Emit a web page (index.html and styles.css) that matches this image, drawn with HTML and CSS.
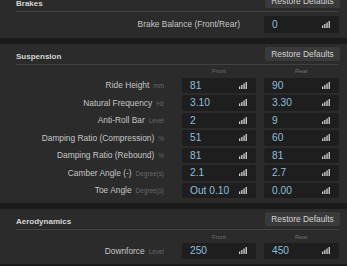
FILE: index.html
```html
<!DOCTYPE html>
<html>
<head>
<meta charset="utf-8">
<link rel="stylesheet" href="styles.css">
</head>
<body>

<!--brakes-->
<div class="panel first">
	<div class="head">
		<div class="title">Brakes</div>
		<div class="restore">Restore Defaults</div>
	</div>
	<div class="row single">
		<div class="name wide">Brake Balance (Front/Rear)</div>
		<div class="box"><span class="val">0</span><svg class="sig" width="8" height="7" viewBox="0 0 8 7"><rect x="0" y="4.5" width="1.3" height="2.5"/><rect x="2.2" y="3" width="1.3" height="4"/><rect x="4.4" y="1.5" width="1.3" height="5.5"/><rect x="6.6" y="0" width="1.3" height="7"/></svg></div>
	</div>
</div>

<!--suspension-->
<div class="panel">
	<div class="head">
		<div class="title">Suspension</div>
		<div class="restore">Restore Defaults</div>
	</div>
	<div class="cols">
		<div></div>
		<div class="col">Front</div>
		<div class="col">Rear</div>
	</div>
	<div class="row">
		<div class="name">Ride Height<span class="unit">mm</span></div>
		<div class="box"><span class="val">81</span><svg class="sig" width="8" height="7" viewBox="0 0 8 7"><rect x="0" y="4.5" width="1.3" height="2.5"/><rect x="2.2" y="3" width="1.3" height="4"/><rect x="4.4" y="1.5" width="1.3" height="5.5"/><rect x="6.6" y="0" width="1.3" height="7"/></svg></div>
		<div class="box"><span class="val">90</span><svg class="sig" width="8" height="7" viewBox="0 0 8 7"><rect x="0" y="4.5" width="1.3" height="2.5"/><rect x="2.2" y="3" width="1.3" height="4"/><rect x="4.4" y="1.5" width="1.3" height="5.5"/><rect x="6.6" y="0" width="1.3" height="7"/></svg></div>
	</div>
	<div class="row">
		<div class="name">Natural Frequency<span class="unit">Hz</span></div>
		<div class="box"><span class="val">3.10</span><svg class="sig" width="8" height="7" viewBox="0 0 8 7"><rect x="0" y="4.5" width="1.3" height="2.5"/><rect x="2.2" y="3" width="1.3" height="4"/><rect x="4.4" y="1.5" width="1.3" height="5.5"/><rect x="6.6" y="0" width="1.3" height="7"/></svg></div>
		<div class="box"><span class="val">3.30</span><svg class="sig" width="8" height="7" viewBox="0 0 8 7"><rect x="0" y="4.5" width="1.3" height="2.5"/><rect x="2.2" y="3" width="1.3" height="4"/><rect x="4.4" y="1.5" width="1.3" height="5.5"/><rect x="6.6" y="0" width="1.3" height="7"/></svg></div>
	</div>
	<div class="row">
		<div class="name">Anti-Roll Bar<span class="unit">Level</span></div>
		<div class="box"><span class="val">2</span><svg class="sig" width="8" height="7" viewBox="0 0 8 7"><rect x="0" y="4.5" width="1.3" height="2.5"/><rect x="2.2" y="3" width="1.3" height="4"/><rect x="4.4" y="1.5" width="1.3" height="5.5"/><rect x="6.6" y="0" width="1.3" height="7"/></svg></div>
		<div class="box"><span class="val">9</span><svg class="sig" width="8" height="7" viewBox="0 0 8 7"><rect x="0" y="4.5" width="1.3" height="2.5"/><rect x="2.2" y="3" width="1.3" height="4"/><rect x="4.4" y="1.5" width="1.3" height="5.5"/><rect x="6.6" y="0" width="1.3" height="7"/></svg></div>
	</div>
	<div class="row">
		<div class="name">Damping Ratio (Compression)<span class="unit">%</span></div>
		<div class="box"><span class="val">51</span><svg class="sig" width="8" height="7" viewBox="0 0 8 7"><rect x="0" y="4.5" width="1.3" height="2.5"/><rect x="2.2" y="3" width="1.3" height="4"/><rect x="4.4" y="1.5" width="1.3" height="5.5"/><rect x="6.6" y="0" width="1.3" height="7"/></svg></div>
		<div class="box"><span class="val">60</span><svg class="sig" width="8" height="7" viewBox="0 0 8 7"><rect x="0" y="4.5" width="1.3" height="2.5"/><rect x="2.2" y="3" width="1.3" height="4"/><rect x="4.4" y="1.5" width="1.3" height="5.5"/><rect x="6.6" y="0" width="1.3" height="7"/></svg></div>
	</div>
	<div class="row">
		<div class="name">Damping Ratio (Rebound)<span class="unit">%</span></div>
		<div class="box"><span class="val">81</span><svg class="sig" width="8" height="7" viewBox="0 0 8 7"><rect x="0" y="4.5" width="1.3" height="2.5"/><rect x="2.2" y="3" width="1.3" height="4"/><rect x="4.4" y="1.5" width="1.3" height="5.5"/><rect x="6.6" y="0" width="1.3" height="7"/></svg></div>
		<div class="box"><span class="val">81</span><svg class="sig" width="8" height="7" viewBox="0 0 8 7"><rect x="0" y="4.5" width="1.3" height="2.5"/><rect x="2.2" y="3" width="1.3" height="4"/><rect x="4.4" y="1.5" width="1.3" height="5.5"/><rect x="6.6" y="0" width="1.3" height="7"/></svg></div>
	</div>
	<div class="row">
		<div class="name">Camber Angle (-)<span class="unit">Degree(s)</span></div>
		<div class="box"><span class="val">2.1</span><svg class="sig" width="8" height="7" viewBox="0 0 8 7"><rect x="0" y="4.5" width="1.3" height="2.5"/><rect x="2.2" y="3" width="1.3" height="4"/><rect x="4.4" y="1.5" width="1.3" height="5.5"/><rect x="6.6" y="0" width="1.3" height="7"/></svg></div>
		<div class="box"><span class="val">2.7</span><svg class="sig" width="8" height="7" viewBox="0 0 8 7"><rect x="0" y="4.5" width="1.3" height="2.5"/><rect x="2.2" y="3" width="1.3" height="4"/><rect x="4.4" y="1.5" width="1.3" height="5.5"/><rect x="6.6" y="0" width="1.3" height="7"/></svg></div>
	</div>
	<div class="row">
		<div class="name">Toe Angle<span class="unit">Degree(s)</span></div>
		<div class="box"><span class="val">Out 0.10</span><svg class="sig" width="8" height="7" viewBox="0 0 8 7"><rect x="0" y="4.5" width="1.3" height="2.5"/><rect x="2.2" y="3" width="1.3" height="4"/><rect x="4.4" y="1.5" width="1.3" height="5.5"/><rect x="6.6" y="0" width="1.3" height="7"/></svg></div>
		<div class="box"><span class="val">0.00</span><svg class="sig" width="8" height="7" viewBox="0 0 8 7"><rect x="0" y="4.5" width="1.3" height="2.5"/><rect x="2.2" y="3" width="1.3" height="4"/><rect x="4.4" y="1.5" width="1.3" height="5.5"/><rect x="6.6" y="0" width="1.3" height="7"/></svg></div>
	</div>
</div>

<!--aerodynamics-->
<div class="panel">
	<div class="head">
		<div class="title">Aerodynamics</div>
		<div class="restore">Restore Defaults</div>
	</div>
	<div class="cols">
		<div></div>
		<div class="col">Front</div>
		<div class="col">Rear</div>
	</div>
	<div class="row">
		<div class="name">Downforce<span class="unit">Level</span></div>
		<div class="box"><span class="val">250</span><svg class="sig" width="8" height="7" viewBox="0 0 8 7"><rect x="0" y="4.5" width="1.3" height="2.5"/><rect x="2.2" y="3" width="1.3" height="4"/><rect x="4.4" y="1.5" width="1.3" height="5.5"/><rect x="6.6" y="0" width="1.3" height="7"/></svg></div>
		<div class="box"><span class="val">450</span><svg class="sig" width="8" height="7" viewBox="0 0 8 7"><rect x="0" y="4.5" width="1.3" height="2.5"/><rect x="2.2" y="3" width="1.3" height="4"/><rect x="4.4" y="1.5" width="1.3" height="5.5"/><rect x="6.6" y="0" width="1.3" height="7"/></svg></div>
	</div>
</div>

</body>
</html>
```
FILE: styles.css
```css
	body {
		margin: 0;
		background-color: #1a1a1a;
		font-family: "Liberation Sans", Arial, sans-serif;
		overflow: hidden;
	}
	.panel {
		background-color: #2b2b2b;
		padding: 3px 8px 3px 16px;
		margin-bottom: 6px;
	}
	.panel.first {
		margin-top: -9px;
	}
	.head {
		display: flex;
		justify-content: space-between;
		height: 17px;
		border-bottom: 1px solid #414141;
	}
	.title {
		align-self: flex-end;
		margin-bottom: 3px;
		color: #d6d6d6;
		font-size: 8px;
		font-weight: bold;
	}
	.restore {
		width: 75px;
		height: 14px;
		line-height: 14px;
		margin-right: -1px;
		text-align: center;
		background-color: #3a3a3a;
		border-radius: 2px;
		color: #d2d2d2;
		font-size: 8.4px;
	}
	.cols, .row {
		display: grid;
		grid-template-columns: 1fr 74px 75px;
		column-gap: 8px;
	}
	.cols {
		height: 13px;
		align-items: center;
	}
	.col {
		text-align: center;
		color: #6f6f6f;
		font-size: 6px;
	}
	.row {
		height: 15.5px;
		margin-bottom: 2px;
		align-items: center;
	}
	.row.single {
		height: 16.5px;
		margin-top: 4px;
	}
	.name {
		text-align: right;
		padding-right: 10px;
		color: #c6c6c6;
		font-size: 8.4px;
		white-space: nowrap;
	}
	.name.wide {
		grid-column: 1 / 3;
		padding-right: 16px;
	}
	.unit {
		color: #686868;
		font-size: 6.4px;
		margin-left: 4px;
	}
	.box {
		height: 100%;
		display: flex;
		align-items: center;
		justify-content: space-between;
		padding: 0 9px 0 8px;
		background-color: #1e1e1e;
		border-radius: 2px;
	}
	.single .box {
		grid-column: 3;
	}
	.val {
		color: #8ac0dc;
		font-size: 10.2px;
	}
	.sig {
		fill: #d4d4d4;
	}
```
